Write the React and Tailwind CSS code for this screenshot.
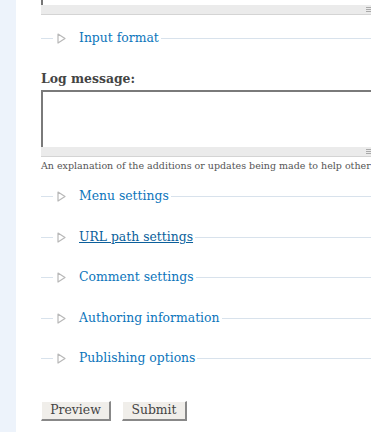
// App.jsx — node edit form, lower half (collapsed fieldsets + buttons)
const serif = { fontFamily: '"DejaVu Serif", "Liberation Serif", serif' }

const Arrow = () => (
  <svg width="9" height="11" viewBox="0 0 9 11" className="shrink-0">
    <path d="M1 1 L8 5.5 L1 10 Z" fill="none" stroke="#b8b8b8" strokeWidth="1.2" strokeLinejoin="round" />
  </svg>
)

// resizable-textarea grip bar; runs off the right edge of the window
const Grip = () => (
  <div className="h-[10px] bg-[#ebebeb] border-b border-[#d4d4d4] flex justify-end items-center">
    <div className="flex flex-col gap-[1px] w-[5px]">
      <div className="h-px bg-[#a9a9a9]" />
      <div className="h-px bg-[#a9a9a9]" />
      <div className="h-px bg-[#a9a9a9]" />
    </div>
  </div>
)

const Legend = ({ label, hover, className = '' }) => (
  <div className={`h-[20px] flex items-center ${className}`}>
    <div className="w-[12px] h-px bg-[#d8e2ec]" />
    <div className="w-[4px]" />
    <Arrow />
    <div className="w-[13px]" />
    <span
      className={`text-[12.4px] leading-[20px] whitespace-nowrap ${hover ? 'text-[#0b5f9b] underline' : 'text-[#0c75bb]'}`}
    >
      {label}
    </span>
    <div className="flex-1 h-px bg-[#d8e2ec] ml-[2px]" />
  </div>
)

export default function App() {
  return (
    <div className="w-[371px] h-[432px] overflow-hidden bg-white flex" style={serif}>
      <div className="w-[16px] shrink-0 bg-[#edf3fb]" />
      <div className="w-[25px] shrink-0" />
      <div className="w-[330px] shrink-0 flex flex-col">
        {/* tail end of the body textarea */}
        <div className="h-[5px] border-l-2 border-[#777] bg-white" />
        <Grip />

        <Legend label="Input format" className="mt-[13px]" />

        <label className="mt-[23px] text-[12.4px] leading-[16px] font-bold text-[#444]">Log message:</label>
        <div className="mt-[3px] h-[57px] border-t-2 border-l-2 border-[#7a7a7a] bg-white" />
        <Grip />
        <div className="mt-[2px] text-[9.5px] leading-[13px] text-[#555] whitespace-nowrap">
          An explanation of the additions or updates being made to help other
        </div>

        <Legend label="Menu settings" className="mt-[14px]" />
        <Legend label="URL path settings" hover className="mt-[21px]" />
        <Legend label="Comment settings" className="mt-[20px]" />
        <Legend label="Authoring information" className="mt-[21px]" />
        <Legend label="Publishing options" className="mt-[20px]" />

        <div className="mt-[33px] flex gap-[11px]">
          <button className="w-[70px] h-[20px] bg-[#f0eeea] border border-t-[#fff] border-l-[#fff] border-r-2 border-b-2 border-r-[#888] border-b-[#888] text-[12.4px] leading-none text-[#444]" style={serif}>
            Preview
          </button>
          <button className="w-[65px] h-[20px] bg-[#f0eeea] border border-t-[#fff] border-l-[#fff] border-r-2 border-b-2 border-r-[#888] border-b-[#888] text-[12.4px] leading-none text-[#444]" style={serif}>
            Submit
          </button>
        </div>
      </div>
    </div>
  )
}
